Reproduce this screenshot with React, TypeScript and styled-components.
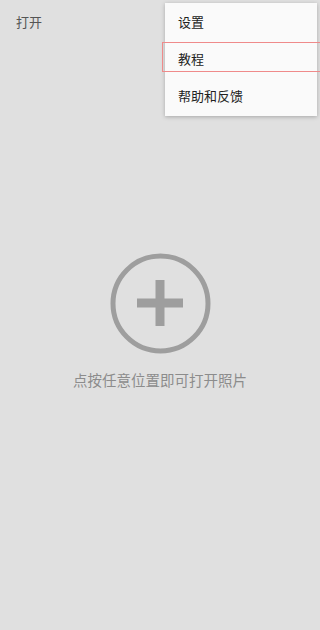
import React from "react";
import styled, { createGlobalStyle } from "styled-components";

const Global = createGlobalStyle`
  html, body { margin: 0; padding: 0; }
  body { font-family: "Noto Sans CJK SC", "Noto Sans", sans-serif; background: #e0e0e0; }
`;

const Page = styled.div`
  position: relative;
  width: 320px;
  height: 630px;
  background: #e0e0e0;
  overflow: hidden;
`;

const TopBar = styled.div`
  height: 42px;
  display: flex;
  align-items: center;
  padding: 0 16px;
  box-sizing: border-box;
`;

const OpenLabel = styled.span`
  font-size: 13px;
  color: #555;
  line-height: 1;
`;

const Center = styled.div`
  display: flex;
  flex-direction: column;
  align-items: center;
  padding-top: 211px;
`;

const Hint = styled.div`
  margin-top: 16px;
  font-size: 14.5px;
  line-height: 20px;
  color: #8c8c8c;
`;

const Menu = styled.div`
  position: absolute;
  top: 3px;
  left: 165px;
  width: 152px;
  padding: 1px 0;
  background: #fafafa;
  box-shadow: 0 1px 4px rgba(0, 0, 0, 0.25);
`;

const Item = styled.div`
  position: relative;
  height: 37px;
  display: flex;
  align-items: center;
  padding: 0 0 3px 13px;
  box-sizing: border-box;
  font-size: 13px;
  color: #222;
`;

const Highlight = styled.div`
  position: absolute;
  top: 1px;
  left: -3px;
  right: -5px;
  height: 30px;
  border: 1px solid #ef8a8a;
  box-sizing: border-box;
`;

const PlusIcon = () => (
  <svg width="101" height="101" viewBox="0 0 101 101">
    <circle cx="50.5" cy="50.5" r="47.5" fill="none" stroke="#9e9e9e" strokeWidth="5" />
    <rect x="27" y="45.5" width="46" height="9" fill="#9e9e9e" />
    <rect x="45.5" y="27" width="9" height="46" fill="#9e9e9e" />
  </svg>
);

export default function App() {
  return (
    <Page>
      <Global />
      <TopBar>
        <OpenLabel>打开</OpenLabel>
      </TopBar>
      <Center>
        <PlusIcon />
        <Hint>点按任意位置即可打开照片</Hint>
      </Center>
      <Menu>
        <Item>设置</Item>
        <Item>
          教程
          <Highlight />
        </Item>
        <Item>帮助和反馈</Item>
      </Menu>
    </Page>
  );
}
